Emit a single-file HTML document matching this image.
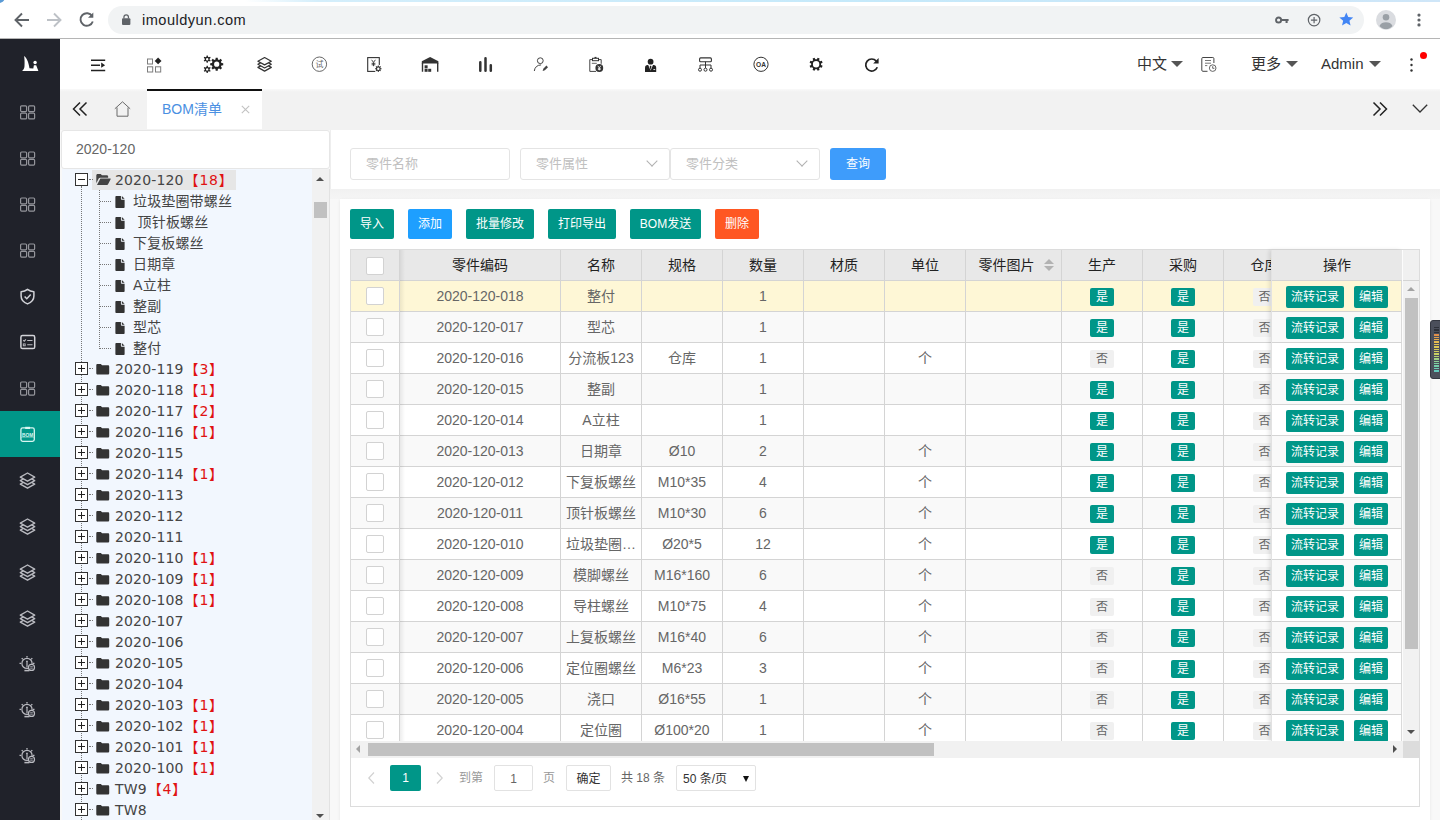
<!DOCTYPE html>
<html lang="zh-CN"><head><meta charset="utf-8"><title>BOM清单</title>
<style>
*{box-sizing:border-box;margin:0;padding:0}
html,body{width:1440px;height:820px;overflow:hidden;background:#fff}
body{font-family:"Liberation Sans","Noto Sans CJK SC",sans-serif;font-size:14px;color:#666;position:relative}
.abs{position:absolute}
svg{display:block;position:absolute;overflow:visible}
/* browser chrome */
#chrome{position:absolute;left:0;top:0;width:1440px;height:39px;background:#fff;border-bottom:1px solid #b5b5b5}
#strip{position:absolute;left:0;top:0;width:1440px;height:2px;background:linear-gradient(90deg,#fff 0,#fff 17%,#d4eefb 22%,#c5e9fa 60%,#cfe6f8 100%)}
#pill{position:absolute;left:108px;top:6px;width:1256px;height:28px;border-radius:14px;background:#f1f3f4}
#url{position:absolute;left:142px;top:10px;font-size:14.6px;line-height:20px;color:#202124;letter-spacing:.46px}
/* sidebar */
#side{position:absolute;left:0;top:39px;width:60px;height:781px;background:#20222a}
#side .act{position:absolute;left:0;top:372px;width:60px;height:46px;background:#009688}
/* nav */
#nav{position:absolute;left:60px;top:39px;width:1380px;height:50px;background:#fff}
.nt{position:absolute;top:14px;font-size:15px;line-height:22px;color:#333;white-space:nowrap}
.caret{position:absolute;width:0;height:0;border-left:6px solid transparent;border-right:6px solid transparent;border-top:6.5px solid #555}
/* tabbar */
#tabs{position:absolute;left:60px;top:89px;width:1380px;height:41px;background:linear-gradient(180deg,#f9f9f9 0,#f2f2f2 3px,#f2f2f2 100%)}
#tab{position:absolute;left:87px;top:0;width:115px;height:40px;background:#fff;border-top:2px solid #111}
#tab span{position:absolute;left:15px;top:8px;font-size:14px;line-height:20px;color:#4a90e2;white-space:nowrap}
/* page bg */
#page{position:absolute;left:60px;top:130px;width:1380px;height:690px;background:#f8f8f8}
#strip2{position:absolute;left:330px;top:189px;width:1110px;height:10px;background:linear-gradient(180deg,#f1f1f1,#f5f5f5)}
/* tree */
#tin{position:absolute;left:61px;top:130px;width:269px;height:39px;background:#fff;border:1px solid #e6e6e6;border-radius:3px}
#tin span{position:absolute;left:14px;top:8px;font-size:14px;line-height:20px;color:#666}
#tree{position:absolute;left:62px;top:169px;width:268px;height:651px;background:#f2f7fe;overflow:hidden;border-right:1px solid #e2e2e2}
#tsb{position:absolute;right:0;top:0;width:17px;height:651px;background:#f1f1f1}
#tsb .th{position:absolute;left:2px;top:33px;width:13px;height:16px;background:#c1c1c1}
.up,.dn,.lf,.rt{position:absolute;width:0;height:0}
.up{border-left:4px solid transparent;border-right:4px solid transparent;border-bottom:4px solid #505050}
.dn{border-left:4px solid transparent;border-right:4px solid transparent;border-top:4px solid #505050}
.lf{border-top:4px solid transparent;border-bottom:4px solid transparent;border-right:4px solid #505050}
.rt{border-top:4px solid transparent;border-bottom:4px solid transparent;border-left:4px solid #505050}
#tw{position:absolute;left:0;top:-1px;width:250px;height:651px;font-family:"DejaVu Sans","Noto Sans CJK SC",sans-serif;font-size:14px;color:#454545;letter-spacing:.15px}
.vline{position:absolute;border-left:1px dotted #777;width:0}
.tn,.tc{position:absolute;left:0;height:21px;width:250px;white-space:nowrap}
.sw{position:absolute;left:13px;top:5px;width:13px;height:13px;border:1px solid #333;background:#fff}
.sw:before{content:"";position:absolute;left:2px;top:5px;width:7px;height:1px;background:#222}
.sw.plus:after{content:"";position:absolute;left:5px;top:2px;width:1px;height:7px;background:#222}

.tn:after{content:"";position:absolute;left:27px;top:11px;width:4px;border-top:1px dotted #777}
.sel{position:absolute;left:30px;top:2px;width:144px;height:20px;background:#e6e6e6}
.tn .fo{left:34px;top:6.6px;width:13.5px;height:10.5px}
.sel .fo{left:4px;top:4px;width:15px;height:11px}
.tn .tx{position:absolute;left:53px;top:1px;line-height:22px}
.sel .tx{left:23px;top:-1px}
.tx b{font-weight:normal;color:#e01212;font-size:14px;margin-left:1px;letter-spacing:.8px}
.tc .hd{position:absolute;left:38px;top:12px;width:11px;border-top:1px dotted #777}
.tc .fi{left:53px;top:7px;width:10px;height:12px}
.tc .tx{position:absolute;left:71px;top:1.5px;line-height:21px;font-size:14px}
/* search card */
#sc{position:absolute;left:330px;top:130px;width:1110px;height:59px;background:#fff;border-left:1px solid #eee}
.inp{position:absolute;top:18px;height:32px;border:1px solid #e4e4e4;border-radius:3px;background:#fff;font-size:13px;color:#c0c0c0;line-height:29px;padding-left:15px}
.chev{position:absolute;right:13px;top:8px;width:8px;height:8px;border-right:1px solid #b0b0b0;border-bottom:1px solid #b0b0b0;transform:rotate(45deg)}
#qbtn{position:absolute;left:499px;top:18px;width:56px;height:32px;border-radius:3px;background:#3e9cfb;color:#fff;font-size:12px;line-height:32px;text-align:center}
/* table card */
#tc{position:absolute;left:340px;top:199px;width:1090px;height:630px;background:#fff;box-shadow:0 1px 3px rgba(0,0,0,.08)}
.btn{position:absolute;top:10px;height:30px;border-radius:2px;color:#fff;font-size:12px;line-height:30px;text-align:center;background:#009688}
#tv{position:absolute;left:10px;top:50px;width:1070px;height:558px;border:1px solid #dcdcdc;background:#fff}
#tb{position:absolute;left:0;top:0;width:921px;height:491px;overflow:hidden}
table{border-collapse:separate;border-spacing:0;table-layout:fixed;width:955px}
th,td{border-right:1px solid #d4d4d4;border-bottom:1px solid #d4d4d4;text-align:center;font-size:14px;font-weight:normal;white-space:nowrap;overflow:hidden;padding:0;position:relative}
th{height:31px;background:#e8e8e8;color:#222;line-height:20px;padding-bottom:0}
td{height:31px;color:#666}
tr.hl td{background:#fef7d6}
tr.ev td{background:#f9f9f9}
.cb{display:inline-block;width:18px;height:18px;border:1px solid #d2d2d2;border-radius:2px;background:#fff;vertical-align:middle}
.bd{display:inline-block;width:24px;height:18px;border-radius:2px;font-size:12px;line-height:18px;vertical-align:middle;position:relative;top:1px}
.bd.y{background:#009688;color:#fff}
.bd.n{background:#f0f0f0;color:#666}
.cj{position:relative;top:-1px}
#fx{position:absolute;left:920px;top:0;width:131px;height:491px;overflow:hidden;background:#fff;box-shadow:-2px 0 4px rgba(0,0,0,.10);border-left:1px solid #e2e2e2}
#fx .fh{height:31px;background:#e8e8e8;border-bottom:1px solid #d4d4d4;text-align:center;line-height:30px;color:#222;font-size:14px}
.fr{position:relative;height:31px;border-bottom:1px solid #d4d4d4;border-right:1px solid #dadada;background:#fff}
.fr.hl{background:#fef7d6}.fr.ev{background:#f9f9f9}
.xb{position:absolute;top:5px;height:22px;border-radius:2px;background:#009688;color:#fff;font-size:12px;line-height:22px;text-align:center}
#patch{position:absolute;left:1052px;top:0;width:16px;height:31px;background:#f0f0f0;border-bottom:1px solid #d4d4d4}
#vsb{position:absolute;left:1052px;top:31px;width:16px;height:460px;background:#f1f1f1}
#vsb .th{position:absolute;left:2px;top:17px;width:13px;height:351px;background:#c1c1c1}
#hsb{position:absolute;left:0;top:491px;width:1052px;height:17px;background:#f1f1f1}
#hsb .th{position:absolute;left:17px;top:2px;width:566px;height:13px;background:#c1c1c1}
#corner{position:absolute;left:1052px;top:491px;width:16px;height:17px;background:#dcdcdc}
#pg{position:absolute;left:0;top:508px;width:1068px;height:48px;font-size:12px;color:#666}
#pg span{position:absolute;top:7px;height:26px;line-height:26px;white-space:nowrap}
#pg .bx{border:1px solid #e2e2e2;border-radius:2px;text-align:center;color:#333;background:#fff}
</style></head>
<body>
<div id="chrome">
  <div id="strip"></div><div class="abs" style="left:-7px;top:-9px;width:12px;height:12px;border-radius:50%;background:#5b9bd5"></div>
  <svg style="left:14px;top:12px" width="16" height="16" viewBox="0 0 16 16"><path d="M15 8H2.5M8 1.5L1.5 8l6.5 6.5" fill="none" stroke="#5f6368" stroke-width="1.9"/></svg>
  <svg style="left:46px;top:12px" width="16" height="16" viewBox="0 0 16 16"><path d="M1 8h12.5M8 1.5L14.5 8 8 14.5" fill="none" stroke="#bdc1c6" stroke-width="1.9"/></svg>
  <svg style="left:78px;top:11px" width="17" height="17" viewBox="0 0 17 17"><path d="M14.2 5.2A6.3 6.3 0 1 0 14.8 10.5" fill="none" stroke="#5f6368" stroke-width="1.9"/><path d="M15.3 1.5v5.3h-5.3z" fill="#5f6368"/></svg>
  <div id="pill"></div>
  <svg style="left:121.8px;top:14.2px" width="8.4" height="10.9" viewBox="0 0 10 13"><rect x="0" y="5" width="10" height="8" rx="1.2" fill="#5f6368"/><path d="M2.3 5.5V3.6a2.7 2.7 0 0 1 5.4 0v1.9" fill="none" stroke="#5f6368" stroke-width="1.5"/></svg>
  <div id="url">imouldyun.com</div>
  <svg style="left:1275px;top:16px" width="14.4" height="8" viewBox="0 0 18 10"><circle cx="4.5" cy="5" r="3.2" fill="none" stroke="#5f6368" stroke-width="2.4"/><path d="M7.5 3.8h9.5v2.4h-1.2v2.6h-2.6v-2.6h-5.7z" fill="#5f6368"/></svg>
  <svg style="left:1307px;top:12.7px" width="14.2" height="14.2" viewBox="0 0 18 18"><circle cx="9" cy="9" r="7.3" fill="none" stroke="#5f6368" stroke-width="1.5"/><path d="M9 5v8M5 9h8" stroke="#5f6368" stroke-width="1.5"/></svg>
  <svg style="left:1337.6px;top:11px" width="16.6" height="16.6" viewBox="0 0 24 24"><path d="M12 17.27L18.18 21l-1.64-7.03L22 9.24l-7.19-.610000L12 2 9.19 8.63 2 9.24l5.46 4.73L5.82 21z" fill="#4285f4"/></svg>
  <svg style="left:1376px;top:10px" width="20" height="20" viewBox="0 0 22 22"><circle cx="11" cy="11" r="11" fill="#dadce0"/><circle cx="11" cy="8" r="3.6" fill="#9aa0a6"/><path d="M3.8 17.5c1.4-3 4-4 7.2-4s5.8 1 7.2 4c-1.8 2.2-4.3 3.5-7.2 3.5s-5.4-1.3-7.2-3.5z" fill="#9aa0a6"/></svg>
  <svg style="left:1416.5px;top:12.4px" width="4" height="16" viewBox="0 0 4 16"><circle cx="2" cy="3.1" r="1.6" fill="#5f6368"/><circle cx="2" cy="8" r="1.6" fill="#5f6368"/><circle cx="2" cy="12.9" r="1.6" fill="#5f6368"/></svg>
</div>

<div id="side"><div class="act"></div>

</div>

<div id="nav">

  <div class="nt" style="left:1077px">中文</div><i class="caret" style="left:1111px;top:22px"></i>
  <div class="nt" style="left:1191px">更多</div><i class="caret" style="left:1226px;top:22px"></i>
  <div class="nt" style="left:1261px;font-size:15px">Admin</div><i class="caret" style="left:1309px;top:22px"></i>
  <svg style="left:1350px;top:19px" width="3" height="14" viewBox="0 0 3 14"><circle cx="1.5" cy="1.5" r="1.2" fill="#333"/><circle cx="1.5" cy="7" r="1.2" fill="#333"/><circle cx="1.5" cy="12.5" r="1.2" fill="#333"/></svg>
  <div class="abs" style="left:1360px;top:13px;width:7px;height:7px;border-radius:50%;background:#ff0000"></div>
</div>

<div id="tabs">
  <svg style="left:12px;top:12px" width="16" height="16" viewBox="0 0 16 16"><path d="M8 1.5L1.5 8 8 14.5M14.5 1.5L8 8l6.5 6.5" fill="none" stroke="#222" stroke-width="1.5"/></svg>
  <svg style="left:54px;top:12px" width="17" height="16" viewBox="0 0 17 16"><path d="M.8 7.8L8.5 .8l7.7 7M3 6.5v8.7h11V6.5" fill="none" stroke="#6a6a6a" stroke-width="1"/></svg>
  <div id="tab"><span>BOM清单</span>
    <svg style="left:94px;top:14px" width="9" height="9" viewBox="0 0 9 9"><path d="M.8.8l7.4 7.4M8.2.8L.8 8.2" stroke="#c2c2c2" stroke-width="1.1"/></svg>
  </div>
  <svg style="left:1312px;top:12px" width="16" height="16" viewBox="0 0 16 16"><path d="M1.5 1.5L8 8l-6.5 6.5M8 1.5L14.5 8 8 14.5" fill="none" stroke="#222" stroke-width="1.5"/></svg>
  <svg style="left:1352px;top:15px" width="16" height="9" viewBox="0 0 16 9"><path d="M.8.8L8 8 15.2.8" fill="none" stroke="#333" stroke-width="1.3"/></svg>
</div>

<div id="page"></div><div id="strip2"></div>

<div id="tin"><span>2020-120</span></div>
<div id="tree">
  <div id="tw">
    <div class="vline" style="left:19px;top:18px;height:640px"></div>
    <div class="vline" style="left:37px;top:22px;height:159px"></div>
<div class="tn" style="top:0"><i class="sw minus"></i><span class="sel"><svg class="fo" viewBox="0 0 17 13"><path d="M0 1.5C0 .7.7 0 1.5 0h3.7l1.5 1.6h5.8c.8 0 1.5.7 1.5 1.5v1.2H4.600000000000001c-.8 0-1.5.4-1.8 1.1L0 10.8z" fill="#444"/><path d="M4.8 5.3h11.5c.6 0 .9.5.6 1l-3 5.900000000000001c-.2.5-.7.8-1.3.8H.8z" fill="#444"/></svg><span class="tx">2020-120<b>【18】</b></span></span></div>
<div class="tc" style="top:21px"><i class="hd"></i><svg class="fi" viewBox="0 0 10 13"><path d="M0 .8C0 .4.4 0 .8 0H6v3.2c0 .5.4.8.8.8H10v8.2c0 .4-.4.8-.8.8H.8c-.4 0-.8-.4-.8-.8z M7 0l3 3H7z" fill="#333"/></svg><span class="tx">垃圾垫圈带螺丝</span></div>
<div class="tc" style="top:42px"><i class="hd"></i><svg class="fi" viewBox="0 0 10 13"><path d="M0 .8C0 .4.4 0 .8 0H6v3.2c0 .5.4.8.8.8H10v8.2c0 .4-.4.8-.8.8H.8c-.4 0-.8-.4-.8-.8z M7 0l3 3H7z" fill="#333"/></svg><span class="tx">&nbsp;顶针板螺丝</span></div>
<div class="tc" style="top:63px"><i class="hd"></i><svg class="fi" viewBox="0 0 10 13"><path d="M0 .8C0 .4.4 0 .8 0H6v3.2c0 .5.4.8.8.8H10v8.2c0 .4-.4.8-.8.8H.8c-.4 0-.8-.4-.8-.8z M7 0l3 3H7z" fill="#333"/></svg><span class="tx">下复板螺丝</span></div>
<div class="tc" style="top:84px"><i class="hd"></i><svg class="fi" viewBox="0 0 10 13"><path d="M0 .8C0 .4.4 0 .8 0H6v3.2c0 .5.4.8.8.8H10v8.2c0 .4-.4.8-.8.8H.8c-.4 0-.8-.4-.8-.8z M7 0l3 3H7z" fill="#333"/></svg><span class="tx">日期章</span></div>
<div class="tc" style="top:105px"><i class="hd"></i><svg class="fi" viewBox="0 0 10 13"><path d="M0 .8C0 .4.4 0 .8 0H6v3.2c0 .5.4.8.8.8H10v8.2c0 .4-.4.8-.8.8H.8c-.4 0-.8-.4-.8-.8z M7 0l3 3H7z" fill="#333"/></svg><span class="tx">A立柱</span></div>
<div class="tc" style="top:126px"><i class="hd"></i><svg class="fi" viewBox="0 0 10 13"><path d="M0 .8C0 .4.4 0 .8 0H6v3.2c0 .5.4.8.8.8H10v8.2c0 .4-.4.8-.8.8H.8c-.4 0-.8-.4-.8-.8z M7 0l3 3H7z" fill="#333"/></svg><span class="tx">整副</span></div>
<div class="tc" style="top:147px"><i class="hd"></i><svg class="fi" viewBox="0 0 10 13"><path d="M0 .8C0 .4.4 0 .8 0H6v3.2c0 .5.4.8.8.8H10v8.2c0 .4-.4.8-.8.8H.8c-.4 0-.8-.4-.8-.8z M7 0l3 3H7z" fill="#333"/></svg><span class="tx">型芯</span></div>
<div class="tc" style="top:168px"><i class="hd"></i><svg class="fi" viewBox="0 0 10 13"><path d="M0 .8C0 .4.4 0 .8 0H6v3.2c0 .5.4.8.8.8H10v8.2c0 .4-.4.8-.8.8H.8c-.4 0-.8-.4-.8-.8z M7 0l3 3H7z" fill="#333"/></svg><span class="tx">整付</span></div>
<div class="tn" style="top:189px"><i class="sw plus"></i><svg class="fo" viewBox="0 0 16 13"><path d="M0 1.6C0 .7.7 0 1.6 0h4l1.6 1.7h7.2c.9 0 1.6.7 1.6 1.6v8.100000000000001c0 .9-.7 1.6-1.6 1.6H1.6C.7 13 0 12.3 0 11.4z" fill="#333"/></svg><span class="tx">2020-119<b>【3】</b></span></div>
<div class="tn" style="top:210px"><i class="sw plus"></i><svg class="fo" viewBox="0 0 16 13"><path d="M0 1.6C0 .7.7 0 1.6 0h4l1.6 1.7h7.2c.9 0 1.6.7 1.6 1.6v8.100000000000001c0 .9-.7 1.6-1.6 1.6H1.6C.7 13 0 12.3 0 11.4z" fill="#333"/></svg><span class="tx">2020-118<b>【1】</b></span></div>
<div class="tn" style="top:231px"><i class="sw plus"></i><svg class="fo" viewBox="0 0 16 13"><path d="M0 1.6C0 .7.7 0 1.6 0h4l1.6 1.7h7.2c.9 0 1.6.7 1.6 1.6v8.100000000000001c0 .9-.7 1.6-1.6 1.6H1.6C.7 13 0 12.3 0 11.4z" fill="#333"/></svg><span class="tx">2020-117<b>【2】</b></span></div>
<div class="tn" style="top:252px"><i class="sw plus"></i><svg class="fo" viewBox="0 0 16 13"><path d="M0 1.6C0 .7.7 0 1.6 0h4l1.6 1.7h7.2c.9 0 1.6.7 1.6 1.6v8.100000000000001c0 .9-.7 1.6-1.6 1.6H1.6C.7 13 0 12.3 0 11.4z" fill="#333"/></svg><span class="tx">2020-116<b>【1】</b></span></div>
<div class="tn" style="top:273px"><i class="sw plus"></i><svg class="fo" viewBox="0 0 16 13"><path d="M0 1.6C0 .7.7 0 1.6 0h4l1.6 1.7h7.2c.9 0 1.6.7 1.6 1.6v8.100000000000001c0 .9-.7 1.6-1.6 1.6H1.6C.7 13 0 12.3 0 11.4z" fill="#333"/></svg><span class="tx">2020-115</span></div>
<div class="tn" style="top:294px"><i class="sw plus"></i><svg class="fo" viewBox="0 0 16 13"><path d="M0 1.6C0 .7.7 0 1.6 0h4l1.6 1.7h7.2c.9 0 1.6.7 1.6 1.6v8.100000000000001c0 .9-.7 1.6-1.6 1.6H1.6C.7 13 0 12.3 0 11.4z" fill="#333"/></svg><span class="tx">2020-114<b>【1】</b></span></div>
<div class="tn" style="top:315px"><i class="sw plus"></i><svg class="fo" viewBox="0 0 16 13"><path d="M0 1.6C0 .7.7 0 1.6 0h4l1.6 1.7h7.2c.9 0 1.6.7 1.6 1.6v8.100000000000001c0 .9-.7 1.6-1.6 1.6H1.6C.7 13 0 12.3 0 11.4z" fill="#333"/></svg><span class="tx">2020-113</span></div>
<div class="tn" style="top:336px"><i class="sw plus"></i><svg class="fo" viewBox="0 0 16 13"><path d="M0 1.6C0 .7.7 0 1.6 0h4l1.6 1.7h7.2c.9 0 1.6.7 1.6 1.6v8.100000000000001c0 .9-.7 1.6-1.6 1.6H1.6C.7 13 0 12.3 0 11.4z" fill="#333"/></svg><span class="tx">2020-112</span></div>
<div class="tn" style="top:357px"><i class="sw plus"></i><svg class="fo" viewBox="0 0 16 13"><path d="M0 1.6C0 .7.7 0 1.6 0h4l1.6 1.7h7.2c.9 0 1.6.7 1.6 1.6v8.100000000000001c0 .9-.7 1.6-1.6 1.6H1.6C.7 13 0 12.3 0 11.4z" fill="#333"/></svg><span class="tx">2020-111</span></div>
<div class="tn" style="top:378px"><i class="sw plus"></i><svg class="fo" viewBox="0 0 16 13"><path d="M0 1.6C0 .7.7 0 1.6 0h4l1.6 1.7h7.2c.9 0 1.6.7 1.6 1.6v8.100000000000001c0 .9-.7 1.6-1.6 1.6H1.6C.7 13 0 12.3 0 11.4z" fill="#333"/></svg><span class="tx">2020-110<b>【1】</b></span></div>
<div class="tn" style="top:399px"><i class="sw plus"></i><svg class="fo" viewBox="0 0 16 13"><path d="M0 1.6C0 .7.7 0 1.6 0h4l1.6 1.7h7.2c.9 0 1.6.7 1.6 1.6v8.100000000000001c0 .9-.7 1.6-1.6 1.6H1.6C.7 13 0 12.3 0 11.4z" fill="#333"/></svg><span class="tx">2020-109<b>【1】</b></span></div>
<div class="tn" style="top:420px"><i class="sw plus"></i><svg class="fo" viewBox="0 0 16 13"><path d="M0 1.6C0 .7.7 0 1.6 0h4l1.6 1.7h7.2c.9 0 1.6.7 1.6 1.6v8.100000000000001c0 .9-.7 1.6-1.6 1.6H1.6C.7 13 0 12.3 0 11.4z" fill="#333"/></svg><span class="tx">2020-108<b>【1】</b></span></div>
<div class="tn" style="top:441px"><i class="sw plus"></i><svg class="fo" viewBox="0 0 16 13"><path d="M0 1.6C0 .7.7 0 1.6 0h4l1.6 1.7h7.2c.9 0 1.6.7 1.6 1.6v8.100000000000001c0 .9-.7 1.6-1.6 1.6H1.6C.7 13 0 12.3 0 11.4z" fill="#333"/></svg><span class="tx">2020-107</span></div>
<div class="tn" style="top:462px"><i class="sw plus"></i><svg class="fo" viewBox="0 0 16 13"><path d="M0 1.6C0 .7.7 0 1.6 0h4l1.6 1.7h7.2c.9 0 1.6.7 1.6 1.6v8.100000000000001c0 .9-.7 1.6-1.6 1.6H1.6C.7 13 0 12.3 0 11.4z" fill="#333"/></svg><span class="tx">2020-106</span></div>
<div class="tn" style="top:483px"><i class="sw plus"></i><svg class="fo" viewBox="0 0 16 13"><path d="M0 1.6C0 .7.7 0 1.6 0h4l1.6 1.7h7.2c.9 0 1.6.7 1.6 1.6v8.100000000000001c0 .9-.7 1.6-1.6 1.6H1.6C.7 13 0 12.3 0 11.4z" fill="#333"/></svg><span class="tx">2020-105</span></div>
<div class="tn" style="top:504px"><i class="sw plus"></i><svg class="fo" viewBox="0 0 16 13"><path d="M0 1.6C0 .7.7 0 1.6 0h4l1.6 1.7h7.2c.9 0 1.6.7 1.6 1.6v8.100000000000001c0 .9-.7 1.6-1.6 1.6H1.6C.7 13 0 12.3 0 11.4z" fill="#333"/></svg><span class="tx">2020-104</span></div>
<div class="tn" style="top:525px"><i class="sw plus"></i><svg class="fo" viewBox="0 0 16 13"><path d="M0 1.6C0 .7.7 0 1.6 0h4l1.6 1.7h7.2c.9 0 1.6.7 1.6 1.6v8.100000000000001c0 .9-.7 1.6-1.6 1.6H1.6C.7 13 0 12.3 0 11.4z" fill="#333"/></svg><span class="tx">2020-103<b>【1】</b></span></div>
<div class="tn" style="top:546px"><i class="sw plus"></i><svg class="fo" viewBox="0 0 16 13"><path d="M0 1.6C0 .7.7 0 1.6 0h4l1.6 1.7h7.2c.9 0 1.6.7 1.6 1.6v8.100000000000001c0 .9-.7 1.6-1.6 1.6H1.6C.7 13 0 12.3 0 11.4z" fill="#333"/></svg><span class="tx">2020-102<b>【1】</b></span></div>
<div class="tn" style="top:567px"><i class="sw plus"></i><svg class="fo" viewBox="0 0 16 13"><path d="M0 1.6C0 .7.7 0 1.6 0h4l1.6 1.7h7.2c.9 0 1.6.7 1.6 1.6v8.100000000000001c0 .9-.7 1.6-1.6 1.6H1.6C.7 13 0 12.3 0 11.4z" fill="#333"/></svg><span class="tx">2020-101<b>【1】</b></span></div>
<div class="tn" style="top:588px"><i class="sw plus"></i><svg class="fo" viewBox="0 0 16 13"><path d="M0 1.6C0 .7.7 0 1.6 0h4l1.6 1.7h7.2c.9 0 1.6.7 1.6 1.6v8.100000000000001c0 .9-.7 1.6-1.6 1.6H1.6C.7 13 0 12.3 0 11.4z" fill="#333"/></svg><span class="tx">2020-100<b>【1】</b></span></div>
<div class="tn" style="top:609px"><i class="sw plus"></i><svg class="fo" viewBox="0 0 16 13"><path d="M0 1.6C0 .7.7 0 1.6 0h4l1.6 1.7h7.2c.9 0 1.6.7 1.6 1.6v8.100000000000001c0 .9-.7 1.6-1.6 1.6H1.6C.7 13 0 12.3 0 11.4z" fill="#333"/></svg><span class="tx">TW9<b>【4】</b></span></div>
<div class="tn" style="top:630px"><i class="sw plus"></i><svg class="fo" viewBox="0 0 16 13"><path d="M0 1.6C0 .7.7 0 1.6 0h4l1.6 1.7h7.2c.9 0 1.6.7 1.6 1.6v8.100000000000001c0 .9-.7 1.6-1.6 1.6H1.6C.7 13 0 12.3 0 11.4z" fill="#333"/></svg><span class="tx">TW8</span></div>
  </div>
  <div id="tsb"><i class="up" style="left:4px;top:8px"></i><div class="th"></div><i class="dn" style="left:4px;top:645px"></i></div>
</div>

<div id="sc">
  <div class="inp" style="left:19px;width:160px">零件名称</div>
  <div class="inp" style="left:189px;width:150px">零件属性<i class="chev"></i></div>
  <div class="inp" style="left:339px;width:150px">零件分类<i class="chev"></i></div>
  <div id="qbtn">查询</div>
</div>

<div id="tc">
  <div class="btn" style="left:10px;width:44px">导入</div>
  <div class="btn" style="left:68px;width:44px;background:#1e9fff">添加</div>
  <div class="btn" style="left:126px;width:68px">批量修改</div>
  <div class="btn" style="left:208px;width:68px">打印导出</div>
  <div class="btn" style="left:290px;width:71px">BOM发送</div>
  <div class="btn" style="left:375px;width:44px;background:#ff5722">删除</div>
  <div id="tv">
    <div id="tb">
      <table>
        <colgroup><col style="width:49px"><col style="width:161px"><col style="width:81px"><col style="width:81px"><col style="width:81px"><col style="width:81px"><col style="width:81px"><col style="width:96px"><col style="width:81px"><col style="width:81px"><col style="width:82px"></colgroup>
        <thead><tr><th><i class="cb"></i></th><th>零件编码</th><th>名称</th><th>规格</th><th>数量</th><th>材质</th><th>单位</th><th style="text-align:left;padding-left:12.5px">零件图片<i class="abs" style="left:78px;top:9px;border:5px solid transparent;border-top:0;border-bottom:5px solid #b2b2b2;width:0;height:0"></i><i class="abs" style="left:78px;top:16px;border:5px solid transparent;border-bottom:0;border-top:5px solid #b2b2b2;width:0;height:0"></i></th><th>生产</th><th>采购</th><th>仓库</th></tr></thead>
        <tbody>
<tr class="hl"><td class="c0"><i class="cb"></i></td><td>2020-120-018</td><td><span class="cj">整付</span></td><td></td><td>1</td><td></td><td></td><td></td><td><span class="bd y">是</span></td><td><span class="bd y">是</span></td><td><span class="bd n">否</span></td></tr>
<tr class="ev"><td class="c0"><i class="cb"></i></td><td>2020-120-017</td><td><span class="cj">型芯</span></td><td></td><td>1</td><td></td><td></td><td></td><td><span class="bd y">是</span></td><td><span class="bd y">是</span></td><td><span class="bd n">否</span></td></tr>
<tr class=""><td class="c0"><i class="cb"></i></td><td>2020-120-016</td><td><span class="cj">分流板123</span></td><td><span class="cj">仓库</span></td><td>1</td><td></td><td><span class="cj">个</span></td><td></td><td><span class="bd n">否</span></td><td><span class="bd y">是</span></td><td><span class="bd n">否</span></td></tr>
<tr class="ev"><td class="c0"><i class="cb"></i></td><td>2020-120-015</td><td><span class="cj">整副</span></td><td></td><td>1</td><td></td><td></td><td></td><td><span class="bd y">是</span></td><td><span class="bd y">是</span></td><td><span class="bd n">否</span></td></tr>
<tr class=""><td class="c0"><i class="cb"></i></td><td>2020-120-014</td><td><span class="cj">A立柱</span></td><td></td><td>1</td><td></td><td></td><td></td><td><span class="bd y">是</span></td><td><span class="bd y">是</span></td><td><span class="bd n">否</span></td></tr>
<tr class="ev"><td class="c0"><i class="cb"></i></td><td>2020-120-013</td><td><span class="cj">日期章</span></td><td>Ø10</td><td>2</td><td></td><td><span class="cj">个</span></td><td></td><td><span class="bd y">是</span></td><td><span class="bd y">是</span></td><td><span class="bd n">否</span></td></tr>
<tr class=""><td class="c0"><i class="cb"></i></td><td>2020-120-012</td><td><span class="cj">下复板螺丝</span></td><td>M10*35</td><td>4</td><td></td><td><span class="cj">个</span></td><td></td><td><span class="bd y">是</span></td><td><span class="bd y">是</span></td><td><span class="bd n">否</span></td></tr>
<tr class="ev"><td class="c0"><i class="cb"></i></td><td>2020-120-011</td><td><span class="cj">顶针板螺丝</span></td><td>M10*30</td><td>6</td><td></td><td><span class="cj">个</span></td><td></td><td><span class="bd y">是</span></td><td><span class="bd y">是</span></td><td><span class="bd n">否</span></td></tr>
<tr class=""><td class="c0"><i class="cb"></i></td><td>2020-120-010</td><td><span class="cj">垃圾垫圈…</span></td><td>Ø20*5</td><td>12</td><td></td><td><span class="cj">个</span></td><td></td><td><span class="bd y">是</span></td><td><span class="bd y">是</span></td><td><span class="bd n">否</span></td></tr>
<tr class="ev"><td class="c0"><i class="cb"></i></td><td>2020-120-009</td><td><span class="cj">模脚螺丝</span></td><td>M16*160</td><td>6</td><td></td><td><span class="cj">个</span></td><td></td><td><span class="bd n">否</span></td><td><span class="bd y">是</span></td><td><span class="bd n">否</span></td></tr>
<tr class=""><td class="c0"><i class="cb"></i></td><td>2020-120-008</td><td><span class="cj">导柱螺丝</span></td><td>M10*75</td><td>4</td><td></td><td><span class="cj">个</span></td><td></td><td><span class="bd n">否</span></td><td><span class="bd y">是</span></td><td><span class="bd n">否</span></td></tr>
<tr class="ev"><td class="c0"><i class="cb"></i></td><td>2020-120-007</td><td><span class="cj">上复板螺丝</span></td><td>M16*40</td><td>6</td><td></td><td><span class="cj">个</span></td><td></td><td><span class="bd n">否</span></td><td><span class="bd y">是</span></td><td><span class="bd n">否</span></td></tr>
<tr class=""><td class="c0"><i class="cb"></i></td><td>2020-120-006</td><td><span class="cj">定位圈螺丝</span></td><td>M6*23</td><td>3</td><td></td><td><span class="cj">个</span></td><td></td><td><span class="bd n">否</span></td><td><span class="bd y">是</span></td><td><span class="bd n">否</span></td></tr>
<tr class="ev"><td class="c0"><i class="cb"></i></td><td>2020-120-005</td><td><span class="cj">浇口</span></td><td>Ø16*55</td><td>1</td><td></td><td><span class="cj">个</span></td><td></td><td><span class="bd n">否</span></td><td><span class="bd y">是</span></td><td><span class="bd n">否</span></td></tr>
<tr class=""><td class="c0"><i class="cb"></i></td><td>2020-120-004</td><td><span class="cj">定位圈</span></td><td>Ø100*20</td><td>1</td><td></td><td><span class="cj">个</span></td><td></td><td><span class="bd n">否</span></td><td><span class="bd y">是</span></td><td><span class="bd n">否</span></td></tr>
        </tbody>
      </table>
    </div>
    <div class="abs" style="left:49px;top:0;width:5px;height:491px;background:linear-gradient(90deg,rgba(0,0,0,.07),rgba(0,0,0,0))"></div>
    <div id="fx"><div class="fh">操作</div>
<div class="fr hl"><span class="xb" style="left:14px;width:58px">流转记录</span><span class="xb" style="left:82px;width:34px">编辑</span></div>
<div class="fr ev"><span class="xb" style="left:14px;width:58px">流转记录</span><span class="xb" style="left:82px;width:34px">编辑</span></div>
<div class="fr "><span class="xb" style="left:14px;width:58px">流转记录</span><span class="xb" style="left:82px;width:34px">编辑</span></div>
<div class="fr ev"><span class="xb" style="left:14px;width:58px">流转记录</span><span class="xb" style="left:82px;width:34px">编辑</span></div>
<div class="fr "><span class="xb" style="left:14px;width:58px">流转记录</span><span class="xb" style="left:82px;width:34px">编辑</span></div>
<div class="fr ev"><span class="xb" style="left:14px;width:58px">流转记录</span><span class="xb" style="left:82px;width:34px">编辑</span></div>
<div class="fr "><span class="xb" style="left:14px;width:58px">流转记录</span><span class="xb" style="left:82px;width:34px">编辑</span></div>
<div class="fr ev"><span class="xb" style="left:14px;width:58px">流转记录</span><span class="xb" style="left:82px;width:34px">编辑</span></div>
<div class="fr "><span class="xb" style="left:14px;width:58px">流转记录</span><span class="xb" style="left:82px;width:34px">编辑</span></div>
<div class="fr ev"><span class="xb" style="left:14px;width:58px">流转记录</span><span class="xb" style="left:82px;width:34px">编辑</span></div>
<div class="fr "><span class="xb" style="left:14px;width:58px">流转记录</span><span class="xb" style="left:82px;width:34px">编辑</span></div>
<div class="fr ev"><span class="xb" style="left:14px;width:58px">流转记录</span><span class="xb" style="left:82px;width:34px">编辑</span></div>
<div class="fr "><span class="xb" style="left:14px;width:58px">流转记录</span><span class="xb" style="left:82px;width:34px">编辑</span></div>
<div class="fr ev"><span class="xb" style="left:14px;width:58px">流转记录</span><span class="xb" style="left:82px;width:34px">编辑</span></div>
<div class="fr "><span class="xb" style="left:14px;width:58px">流转记录</span><span class="xb" style="left:82px;width:34px">编辑</span></div>
    </div>
    <div id="patch"></div>
    <div id="vsb"><i class="up" style="left:4px;top:6px;border-bottom-color:#a3a3a3"></i><div class="th"></div><i class="dn" style="left:4px;top:449px"></i></div>
    <div id="hsb"><i class="lf" style="left:5px;top:4px;border-right-color:#a3a3a3"></i><div class="th"></div><i class="rt" style="left:1042px;top:4px"></i></div>
    <div id="corner"></div>
    <div id="pg">
      <svg style="left:17px;top:14px" width="7" height="12" viewBox="0 0 7 12"><path d="M6 .5L.8 6 6 11.5" fill="none" stroke="#d2d2d2" stroke-width="1.2"/></svg>
      <span style="left:39px;width:31px;background:#009688;color:#fff;text-align:center;border-radius:2px">1</span>
      <svg style="left:85px;top:14px" width="7" height="12" viewBox="0 0 7 12"><path d="M1 .5L6.2 6 1 11.5" fill="none" stroke="#d2d2d2" stroke-width="1.2"/></svg>
      <span style="left:108px;color:#999">到第</span>
      <span class="bx" style="left:143px;width:39px;color:#666">1</span>
      <span style="left:192px;color:#999">页</span>
      <span class="bx" style="left:215px;width:45px">确定</span>
      <span style="left:270px;color:#666">共 18 条</span>
      <span class="bx" style="left:325px;width:80px;text-align:left;padding-left:6px">50 条/页<i class="dn" style="left:66px;top:10px;border-top-color:#111;border-left-width:3.5px;border-right-width:3.5px;border-top-width:6px"></i></span>
    </div>
  </div>
</div>
<div class="abs" style="left:1430px;top:320px;width:14px;height:59px;border-radius:3px;background:#4b4f5b;border:1px solid #33363f"><div class="abs" style="left:3px;top:6px;width:5px;height:45px;background:linear-gradient(180deg,#2d3038 0,#2d3038 14%,#e08a4a 16%,#e6c050 35%,#c9d060 60%,#7fd0a0 80%,#60c8c0 100%)"></div><div class="abs" style="left:3px;top:6px;width:5px;height:45px;background:repeating-linear-gradient(180deg,transparent 0,transparent 1.3px,#4b4f5b 1.3px,#4b4f5b 2.4px)"></div></div>
<svg style="left:0;top:0;pointer-events:none" width="1440" height="820" viewBox="0 0 1440 820">
<path d="M24.1 55.9C26.6 57.8 28.6 61.6 29.5 68.3L33.3 68.4L33.9 65.2L36.2 65.2L38.4 71L22 71C23.7 69.6 24.4 68 24.5 66C24.7 62.5 24.6 59.5 24.1 55.9Z" fill="#fff"/><circle cx="35.1" cy="62.5" r="1.7" fill="#fff"/>
<rect x="20.6" y="105.8" width="6" height="5.8" rx="1" fill="none" stroke="#94959b" stroke-width="1.2"/><rect x="28.6" y="105.8" width="6" height="5.8" rx="1" fill="none" stroke="#94959b" stroke-width="1.2"/><rect x="20.6" y="113.1" width="6" height="5.8" rx="1" fill="none" stroke="#94959b" stroke-width="1.2"/><rect x="28.6" y="113.1" width="6" height="5.8" rx="1" fill="none" stroke="#94959b" stroke-width="1.2"/>
<rect x="20.6" y="152.0" width="6" height="5.8" rx="1" fill="none" stroke="#94959b" stroke-width="1.2"/><rect x="28.6" y="152.0" width="6" height="5.8" rx="1" fill="none" stroke="#94959b" stroke-width="1.2"/><rect x="20.6" y="159.3" width="6" height="5.8" rx="1" fill="none" stroke="#94959b" stroke-width="1.2"/><rect x="28.6" y="159.3" width="6" height="5.8" rx="1" fill="none" stroke="#94959b" stroke-width="1.2"/>
<rect x="20.6" y="198.0" width="6" height="5.8" rx="1" fill="none" stroke="#94959b" stroke-width="1.2"/><rect x="28.6" y="198.0" width="6" height="5.8" rx="1" fill="none" stroke="#94959b" stroke-width="1.2"/><rect x="20.6" y="205.3" width="6" height="5.8" rx="1" fill="none" stroke="#94959b" stroke-width="1.2"/><rect x="28.6" y="205.3" width="6" height="5.8" rx="1" fill="none" stroke="#94959b" stroke-width="1.2"/>
<rect x="20.6" y="244.0" width="6" height="5.8" rx="1" fill="none" stroke="#94959b" stroke-width="1.2"/><rect x="28.6" y="244.0" width="6" height="5.8" rx="1" fill="none" stroke="#94959b" stroke-width="1.2"/><rect x="20.6" y="251.3" width="6" height="5.8" rx="1" fill="none" stroke="#94959b" stroke-width="1.2"/><rect x="28.6" y="251.3" width="6" height="5.8" rx="1" fill="none" stroke="#94959b" stroke-width="1.2"/>
<rect x="20.6" y="382.0" width="6" height="5.8" rx="1" fill="none" stroke="#94959b" stroke-width="1.2"/><rect x="28.6" y="382.0" width="6" height="5.8" rx="1" fill="none" stroke="#94959b" stroke-width="1.2"/><rect x="20.6" y="389.3" width="6" height="5.8" rx="1" fill="none" stroke="#94959b" stroke-width="1.2"/><rect x="28.6" y="389.3" width="6" height="5.8" rx="1" fill="none" stroke="#94959b" stroke-width="1.2"/>
<path d="M27.5 289.4C25.6 291 23.2 291.7 21.1 291.8V296C21.1 299.9 23.9 302.5 27.5 303.9C31.1 302.5 33.9 299.9 33.9 296V291.8C31.8 291.7 29.4 291 27.5 289.4Z" fill="none" stroke="#d2d3d8" stroke-width="1.5" stroke-linejoin="round"/><path d="M24.6 296.5l2.2 2.2 3.9-4.1" fill="none" stroke="#d2d3d8" stroke-width="1.5"/>
<rect x="20.9" y="335.6" width="13.8" height="13" rx="1.6" fill="none" stroke="#d2d3d8" stroke-width="1.5"/><path d="M23.2 340.2l1 1 1.7-1.9M27.2 340.5h5.3M27.2 344.8h5.3" fill="none" stroke="#b9bac0" stroke-width="1.1"/><rect x="23.3" y="343.9" width="1.9" height="1.9" fill="none" stroke="#b9bac0" stroke-width=".9"/>
<rect x="20.9" y="427.9" width="13.4" height="13.4" rx="1.8" fill="none" stroke="#d9f7f2" stroke-width="1.3"/><path d="M25.2 427.9h4.8" stroke="#d9f7f2" stroke-width="2.2"/><path d="M21 437.6h13.2" stroke="#d9f7f2" stroke-width=".7" opacity=".5"/><text x="27.6" y="436.5" font-family="Liberation Sans,sans-serif" font-weight="bold" font-size="4.8" fill="#d9f7f2" text-anchor="middle">BOM</text>
<path d="M27.5 480.00l7.2 4.1-7.2 4.1-7.2-4.1z" fill="#20222a" stroke="#b9bac0" stroke-width="1.4" stroke-linejoin="round"/><path d="M27.5 476.50l7.2 4.1-7.2 4.1-7.2-4.1z" fill="#20222a" stroke="#b9bac0" stroke-width="1.4" stroke-linejoin="round"/><path d="M27.5 473.00l7.2 4.1-7.2 4.1-7.2-4.1z" fill="#20222a" stroke="#b9bac0" stroke-width="1.4" stroke-linejoin="round"/>
<path d="M27.5 526.00l7.2 4.1-7.2 4.1-7.2-4.1z" fill="#20222a" stroke="#b9bac0" stroke-width="1.4" stroke-linejoin="round"/><path d="M27.5 522.50l7.2 4.1-7.2 4.1-7.2-4.1z" fill="#20222a" stroke="#b9bac0" stroke-width="1.4" stroke-linejoin="round"/><path d="M27.5 519.00l7.2 4.1-7.2 4.1-7.2-4.1z" fill="#20222a" stroke="#b9bac0" stroke-width="1.4" stroke-linejoin="round"/>
<path d="M27.5 572.00l7.2 4.1-7.2 4.1-7.2-4.1z" fill="#20222a" stroke="#b9bac0" stroke-width="1.4" stroke-linejoin="round"/><path d="M27.5 568.50l7.2 4.1-7.2 4.1-7.2-4.1z" fill="#20222a" stroke="#b9bac0" stroke-width="1.4" stroke-linejoin="round"/><path d="M27.5 565.00l7.2 4.1-7.2 4.1-7.2-4.1z" fill="#20222a" stroke="#b9bac0" stroke-width="1.4" stroke-linejoin="round"/>
<path d="M27.5 618.00l7.2 4.1-7.2 4.1-7.2-4.1z" fill="#20222a" stroke="#b9bac0" stroke-width="1.4" stroke-linejoin="round"/><path d="M27.5 614.50l7.2 4.1-7.2 4.1-7.2-4.1z" fill="#20222a" stroke="#b9bac0" stroke-width="1.4" stroke-linejoin="round"/><path d="M27.5 611.00l7.2 4.1-7.2 4.1-7.2-4.1z" fill="#20222a" stroke="#b9bac0" stroke-width="1.4" stroke-linejoin="round"/>
<circle cx="27" cy="663.4" r="5.1" fill="none" stroke="#b9bac0" stroke-width="1.2"/><path d="M21.1 663.4L19.5 663.4" stroke="#b9bac0" stroke-width="1.3"/><path d="M22.8 659.2L21.7 658.1" stroke="#b9bac0" stroke-width="1.3"/><path d="M27.0 657.5L27.0 655.9" stroke="#b9bac0" stroke-width="1.3"/><path d="M31.2 659.2L32.3 658.1" stroke="#b9bac0" stroke-width="1.3"/><path d="M32.9 663.4L34.5 663.4" stroke="#b9bac0" stroke-width="1.3"/><path d="M24.4 670.6h5" stroke="#b9bac0" stroke-width="1.5" fill="none"/><path d="M26.1 661.4h1.7M27 661.4v6" stroke="#b9bac0" stroke-width="1.2" fill="none"/><circle cx="31.5" cy="667.4" r="3" fill="#20222a" stroke="#b9bac0" stroke-width="1.2"/><path d="M30.2 666.6999999999999h2.6M30.2 668.1999999999999h2.6" stroke="#b9bac0" stroke-width=".8"/>
<circle cx="27" cy="709.4" r="5.1" fill="none" stroke="#b9bac0" stroke-width="1.2"/><path d="M21.1 709.4L19.5 709.4" stroke="#b9bac0" stroke-width="1.3"/><path d="M22.8 705.2L21.7 704.1" stroke="#b9bac0" stroke-width="1.3"/><path d="M27.0 703.5L27.0 701.9" stroke="#b9bac0" stroke-width="1.3"/><path d="M31.2 705.2L32.3 704.1" stroke="#b9bac0" stroke-width="1.3"/><path d="M32.9 709.4L34.5 709.4" stroke="#b9bac0" stroke-width="1.3"/><path d="M24.4 716.6h5" stroke="#b9bac0" stroke-width="1.5" fill="none"/><path d="M26.1 707.4h1.7M27 707.4v6" stroke="#b9bac0" stroke-width="1.2" fill="none"/><circle cx="31.5" cy="713.4" r="3" fill="#20222a" stroke="#b9bac0" stroke-width="1.2"/><path d="M30.2 712.6999999999999h2.6M30.2 714.1999999999999h2.6" stroke="#b9bac0" stroke-width=".8"/>
<circle cx="27" cy="755.4" r="5.1" fill="none" stroke="#b9bac0" stroke-width="1.2"/><path d="M21.1 755.4L19.5 755.4" stroke="#b9bac0" stroke-width="1.3"/><path d="M22.8 751.2L21.7 750.1" stroke="#b9bac0" stroke-width="1.3"/><path d="M27.0 749.5L27.0 747.9" stroke="#b9bac0" stroke-width="1.3"/><path d="M31.2 751.2L32.3 750.1" stroke="#b9bac0" stroke-width="1.3"/><path d="M32.9 755.4L34.5 755.4" stroke="#b9bac0" stroke-width="1.3"/><path d="M24.4 762.6h5" stroke="#b9bac0" stroke-width="1.5" fill="none"/><path d="M26.1 753.4h1.7M27 753.4v6" stroke="#b9bac0" stroke-width="1.2" fill="none"/><circle cx="31.5" cy="759.4" r="3" fill="#20222a" stroke="#b9bac0" stroke-width="1.2"/><path d="M30.2 758.6999999999999h2.6M30.2 760.1999999999999h2.6" stroke="#b9bac0" stroke-width=".8"/>
<path d="M91 60.2h14.2M91 65.2h9M91 70.4h14.2" stroke="#222" stroke-width="1.5"/><path d="M101.2 62.6l3.9 2.6-3.9 2.6z" fill="#222"/>
<rect x="147.5" y="59" width="5" height="5" fill="none" stroke="#7d7d7d"/><rect x="147.5" y="66.8" width="5.2" height="5.2" fill="none" stroke="#7d7d7d"/><rect x="155.5" y="66.8" width="5.2" height="5.2" fill="none" stroke="#7d7d7d"/><path d="M158.1 57.5l3.4 3.4-3.4 3.4-3.4-3.4z" fill="#222"/>
<path d="M221.45 62.98L223.22 63.17L223.22 65.23L221.45 65.42L220.92 66.69L222.04 68.08L220.58 69.54L219.19 68.42L217.92 68.95L217.73 70.72L215.67 70.72L215.48 68.95L214.21 68.42L212.82 69.54L211.36 68.08L212.48 66.69L211.95 65.42L210.18 65.23L210.18 63.17L211.95 62.98L212.48 61.71L211.36 60.32L212.82 58.86L214.21 59.98L215.48 59.45L215.67 57.68L217.73 57.68L217.92 59.45L219.19 59.98L220.58 58.86L222.04 60.32L220.92 61.71ZM214.10 64.20a2.6 2.6 0 1 0 5.2 0a2.6 2.6 0 1 0 -5.2 0Z" fill="#222" fill-rule="evenodd"/>
<path d="M206.43 56.82L206.62 55.55L207.78 55.55L207.97 56.82L208.87 57.34L210.08 56.87L210.65 57.87L209.65 58.68L209.65 59.72L210.65 60.53L210.08 61.53L208.87 61.06L207.97 61.58L207.78 62.85L206.62 62.85L206.43 61.58L205.53 61.06L204.32 61.53L203.75 60.53L204.75 59.72L204.75 58.68L203.75 57.87L204.32 56.87L205.53 57.34ZM206.00 59.20a1.2 1.2 0 1 0 2.4 0a1.2 1.2 0 1 0 -2.4 0Z" fill="#222" fill-rule="evenodd"/>
<path d="M206.43 67.02L206.62 65.75L207.78 65.75L207.97 67.02L208.87 67.54L210.08 67.07L210.65 68.07L209.65 68.88L209.65 69.92L210.65 70.73L210.08 71.73L208.87 71.26L207.97 71.78L207.78 73.05L206.62 73.05L206.43 71.78L205.53 71.26L204.32 71.73L203.75 70.73L204.75 69.92L204.75 68.88L203.75 68.07L204.32 67.07L205.53 67.54ZM206.00 69.40a1.2 1.2 0 1 0 2.4 0a1.2 1.2 0 1 0 -2.4 0Z" fill="#222" fill-rule="evenodd"/>
<path d="M264.6 63.70l6.7 3.7-6.7 3.7-6.7-3.7z" fill="#fff" stroke="#333" stroke-width="1.2" stroke-linejoin="round"/><path d="M264.6 60.60l6.7 3.7-6.7 3.7-6.7-3.7z" fill="#fff" stroke="#333" stroke-width="1.2" stroke-linejoin="round"/><path d="M264.6 57.50l6.7 3.7-6.7 3.7-6.7-3.7z" fill="#fff" stroke="#333" stroke-width="1.2" stroke-linejoin="round"/>
<circle cx="319.4" cy="64.2" r="7.2" fill="none" stroke="#555" stroke-width=".9"/><text x="319.4" y="67.2" font-family="Liberation Sans,Noto Sans CJK SC,sans-serif" font-size="8" fill="#666" text-anchor="middle">试</text>
<rect x="367.7" y="57.6" width="11.6" height="13.8" fill="none" stroke="#333" stroke-width="1.1"/><path d="M371.6 59.8l1.9 2.6 1.9-2.6M373.5 62.4v3.8M371.6 63.3h3.8M371.6 64.8h3.8" fill="none" stroke="#333" stroke-width=".9"/><circle cx="378.3" cy="68.7" r="3.9" fill="#fff"/><path d="M380.63 68.14L381.56 68.18L381.56 69.22L380.63 69.26L380.35 69.95L380.97 70.64L380.24 71.37L379.55 70.75L378.86 71.03L378.82 71.96L377.78 71.96L377.74 71.03L377.05 70.75L376.36 71.37L375.63 70.64L376.25 69.95L375.97 69.26L375.04 69.22L375.04 68.18L375.97 68.14L376.25 67.45L375.63 66.76L376.36 66.03L377.05 66.65L377.74 66.37L377.78 65.44L378.82 65.44L378.86 66.37L379.55 66.65L380.24 66.03L380.97 66.76L380.35 67.45ZM377.10 68.70a1.2 1.2 0 1 0 2.4 0a1.2 1.2 0 1 0 -2.4 0Z" fill="#333" fill-rule="evenodd"/>
<path d="M421.8 61.2L430.1 57.1L438.4 61.2V63.6H421.8Z" fill="#333"/><path d="M422.5 63v8.8M437.7 63v8.8" stroke="#333" stroke-width="1.4"/><rect x="424.6" y="65.3" width="3" height="3" fill="#333"/><rect x="424.6" y="68.8" width="3" height="3" fill="#333"/><rect x="428.2" y="68.8" width="3" height="3" fill="#333"/>
<path d="M480.3 62.2v8.6M485.5 58.2v12.6M490.8 65.2v5.6" stroke="#333" stroke-width="2.5" stroke-linecap="round"/>
<circle cx="540.3" cy="60.7" r="2.9" fill="none" stroke="#444" stroke-width="1"/><path d="M534.3 71c.4-3.6 2.8-6 6.8-6.1" fill="none" stroke="#444" stroke-width="1"/><path d="M542.6 71l.7-2.3 3.1-3.1 1.6 1.6-3.1 3.1z" fill="#444"/>
<path d="M592.3 59.6h-2.5v11.8h6.2M598.7 59.6h2.5v4.2" fill="none" stroke="#444" stroke-width="1"/><rect x="592.5" y="58.3" width="6" height="2.4" fill="none" stroke="#333" stroke-width="1"/><path d="M594.5 57.5h2" stroke="#333" stroke-width="1.2"/><path d="M591.8 63.3h5" stroke="#555" stroke-width=".9"/><circle cx="599.3" cy="68" r="3.9" fill="#333"/><path d="M597.8 65.8l1.5 2 1.5-2M599.3 67.8v2.6M597.9 68.3h2.8M597.9 69.4h2.8" fill="none" stroke="#fff" stroke-width=".8"/>
<circle cx="650.6" cy="61.7" r="2.9" fill="#222"/><path d="M645 72v-4.3c0-1.6 1-2.7 2.6-2.7h6c1.6 0 2.6 1.1 2.6 2.7V72z" fill="#222"/><path d="M648.2 64.9h4.8l-2.4 5.6z" fill="#fff"/><path d="M650.6 65.4l.9 1.1-.9 3.4-.9-3.4z" fill="#222"/><path d="M653.4 69.5h1.8" stroke="#fff" stroke-width=".8"/>
<rect x="699.6" y="57.9" width="11.8" height="3.8" rx="1" fill="none" stroke="#333" stroke-width="1.1"/><path d="M705.5 61.7v6.3M700 68v-3h11v3" fill="none" stroke="#333" stroke-width="1"/><circle cx="700" cy="69.7" r="1.5" fill="#fff" stroke="#333" stroke-width="1"/><circle cx="705.5" cy="69.7" r="1.5" fill="#fff" stroke="#333" stroke-width="1"/><circle cx="711" cy="69.7" r="1.5" fill="#fff" stroke="#333" stroke-width="1"/>
<circle cx="761" cy="64.3" r="7.1" fill="none" stroke="#333" stroke-width="1"/><text x="761" y="66.7" font-family="Liberation Sans,sans-serif" font-weight="bold" font-size="6.6" fill="#333" text-anchor="middle">OA</text>
<path d="M821.04 64.98L822.61 65.76L821.81 67.70L820.15 67.14L819.04 68.25L819.60 69.91L817.66 70.71L816.88 69.14L815.32 69.14L814.54 70.71L812.60 69.91L813.16 68.25L812.05 67.14L810.39 67.70L809.59 65.76L811.16 64.98L811.16 63.42L809.59 62.64L810.39 60.70L812.05 61.26L813.16 60.15L812.60 58.49L814.54 57.69L815.32 59.26L816.88 59.26L817.66 57.69L819.60 58.49L819.04 60.15L820.15 61.26L821.81 60.70L822.61 62.64L821.04 63.42ZM812.90 64.20a3.2 3.2 0 1 0 6.4 0a3.2 3.2 0 1 0 -6.4 0Z" fill="#222" fill-rule="evenodd"/>
<path d="M876.3 61.1A6 6 0 1 0 877.3 67.3" fill="none" stroke="#222" stroke-width="1.7"/><path d="M878.6 58v5.4h-5.4z" fill="#222"/>
<path d="M1207.5 71.3h-4.6c-.7 0-1.1-.4-1.1-1.1V58.6c0-.7.4-1.1 1.1-1.1h9.9c.7 0 1.1.4 1.1 1.1v4.4" fill="none" stroke="#444" stroke-width="1"/><path d="M1205 60.5h6M1205 63.2h6M1205 65.6h2.3" stroke="#666" stroke-width=".9"/><circle cx="1212.7" cy="68.1" r="3.3" fill="#fff" stroke="#555" stroke-width=".9"/><path d="M1212.7 66.2v2.1h1.7" fill="none" stroke="#555" stroke-width=".9"/>
</svg>
</body></html>
